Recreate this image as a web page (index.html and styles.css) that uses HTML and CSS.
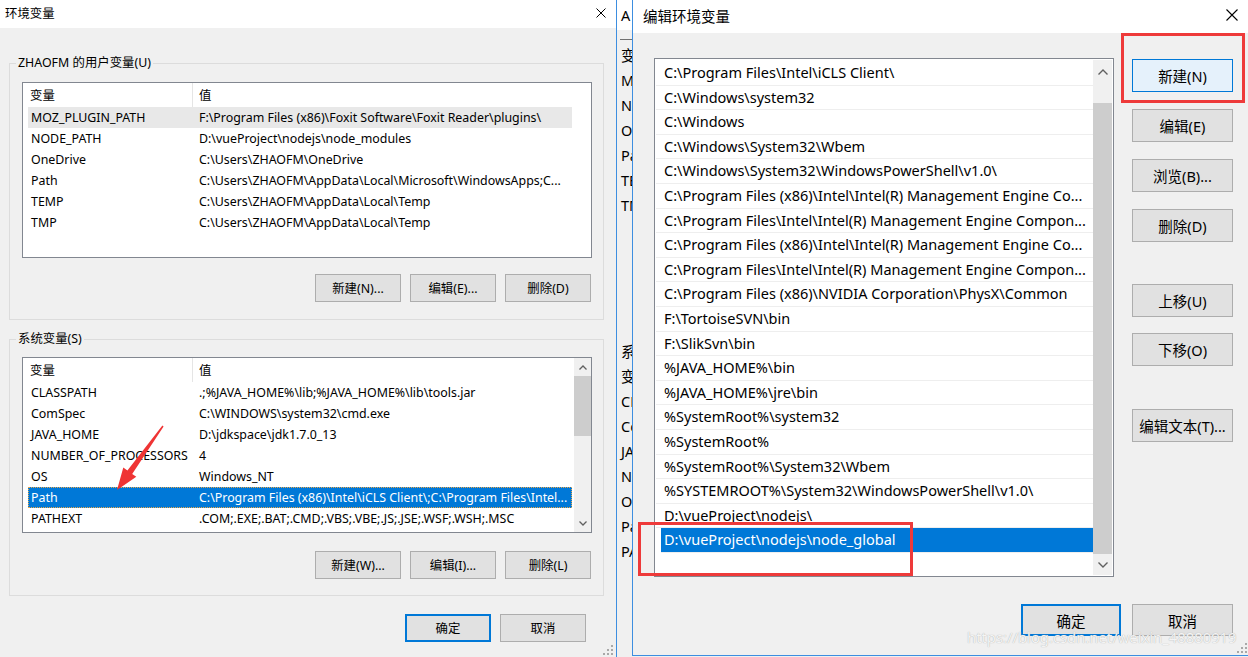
FILE: index.html
```html
<!DOCTYPE html>
<html lang="zh-CN">
<head>
    <meta charset="UTF-8">
    <title>环境变量</title>
    <link rel="stylesheet" href="styles.css">
</head>
<body>
<div class="screen">

    <!-- 环境变量 对话框 -->
    <div class="env-dlg">
        <div class="titlebar">
            <span>环境变量</span>
            <svg class="close" width="10" height="10" viewBox="0 0 10 10"><path d="M0.5 0.5L9.5 9.5M9.5 0.5L0.5 9.5" stroke="#000" stroke-width="1"/></svg>
        </div>
        <div class="env-body">
            <fieldset class="group group-user">
                <legend>ZHAOFM 的用户变量(U)</legend>
                <div class="listview">
                    <div class="lv-main">
                        <div class="lv-head"><div class="c1">变量</div><div class="c2">值</div></div>
                        <div class="lv-row hot"><div class="c1">MOZ_PLUGIN_PATH</div><div class="c2">F:\Program Files (x86)\Foxit Software\Foxit Reader\plugins\</div></div>
                        <div class="lv-row"><div class="c1">NODE_PATH</div><div class="c2">D:\vueProject\nodejs\node_modules</div></div>
                        <div class="lv-row"><div class="c1">OneDrive</div><div class="c2">C:\Users\ZHAOFM\OneDrive</div></div>
                        <div class="lv-row"><div class="c1">Path</div><div class="c2">C:\Users\ZHAOFM\AppData\Local\Microsoft\WindowsApps;C...</div></div>
                        <div class="lv-row"><div class="c1">TEMP</div><div class="c2">C:\Users\ZHAOFM\AppData\Local\Temp</div></div>
                        <div class="lv-row"><div class="c1">TMP</div><div class="c2">C:\Users\ZHAOFM\AppData\Local\Temp</div></div>
                    </div>
                </div>
                <div class="btn-row">
                    <button class="btn">新建(N)...</button>
                    <button class="btn">编辑(E)...</button>
                    <button class="btn">删除(D)</button>
                </div>
            </fieldset>

            <fieldset class="group group-sys">
                <legend>系统变量(S)</legend>
                <div class="listview">
                    <div class="lv-main">
                        <div class="lv-head"><div class="c1">变量</div><div class="c2">值</div></div>
                        <div class="lv-row"><div class="c1">CLASSPATH</div><div class="c2">.;%JAVA_HOME%\lib;%JAVA_HOME%\lib\tools.jar</div></div>
                        <div class="lv-row"><div class="c1">ComSpec</div><div class="c2">C:\WINDOWS\system32\cmd.exe</div></div>
                        <div class="lv-row"><div class="c1">JAVA_HOME</div><div class="c2">D:\jdkspace\jdk1.7.0_13</div></div>
                        <div class="lv-row"><div class="c1">NUMBER_OF_PROCESSORS</div><div class="c2">4</div></div>
                        <div class="lv-row"><div class="c1">OS</div><div class="c2">Windows_NT</div></div>
                        <div class="lv-row sel"><div class="c1">Path</div><div class="c2">C:\Program Files (x86)\Intel\iCLS Client\;C:\Program Files\Intel...</div></div>
                        <div class="lv-row"><div class="c1">PATHEXT</div><div class="c2">.COM;.EXE;.BAT;.CMD;.VBS;.VBE;.JS;.JSE;.WSF;.WSH;.MSC</div></div>
                    </div>
                    <div class="vscroll small">
                        <div class="sb-arrow up"><svg width="8" height="5" viewBox="0 0 8 5"><path d="M0.5 4.5L4 1L7.5 4.5" fill="none" stroke="#606060" stroke-width="1.3"/></svg></div>
                        <div class="sb-thumb"></div>
                        <div class="sb-track"></div>
                        <div class="sb-arrow down"><svg width="8" height="5" viewBox="0 0 8 5"><path d="M0.5 0.5L4 4L7.5 0.5" fill="none" stroke="#606060" stroke-width="1.3"/></svg></div>
                    </div>
                </div>
                <div class="btn-row">
                    <button class="btn">新建(W)...</button>
                    <button class="btn">编辑(I)...</button>
                    <button class="btn">删除(L)</button>
                </div>
            </fieldset>

            <div class="footer">
                <button class="btn default">确定</button>
                <button class="btn">取消</button>
            </div>
        </div>
        <svg class="grip" width="10" height="10" viewBox="0 0 10 10" fill="#a8a8a8">
            <rect x="8" y="0" width="2" height="2"/><rect x="8" y="4" width="2" height="2"/><rect x="4" y="4" width="2" height="2"/>
            <rect x="8" y="8" width="2" height="2"/><rect x="4" y="8" width="2" height="2"/><rect x="0" y="8" width="2" height="2"/>
        </svg>
    </div>

    <!-- 后面露出的窗口边 -->
    <div class="behind">
        <div class="bh-title">A</div>
        <div class="bh-rule"></div>
        <div class="bh-line">变量</div>
        <div class="bh-line">MOZ_PLUGIN_PATH</div>
        <div class="bh-line">NODE_PATH</div>
        <div class="bh-line">OneDrive</div>
        <div class="bh-line">Path</div>
        <div class="bh-line">TEMP</div>
        <div class="bh-line">TMP</div>
        <div class="bh-line bh-gap">系统变量</div>
        <div class="bh-line">变量</div>
        <div class="bh-line">CLASSPATH</div>
        <div class="bh-line">ComSpec</div>
        <div class="bh-line">JAVA_HOME</div>
        <div class="bh-line">NUMBER_OF_PROCESSORS</div>
        <div class="bh-line">OS</div>
        <div class="bh-line">Path</div>
        <div class="bh-line">PATHEXT</div>
    </div>

    <!-- 编辑环境变量 对话框 -->
    <div class="edit-dlg">
        <div class="titlebar">
            <span>编辑环境变量</span>
            <svg class="close" width="12" height="12" viewBox="0 0 12 12"><path d="M0.5 0.5L11.5 11.5M11.5 0.5L0.5 11.5" stroke="#000" stroke-width="1.1"/></svg>
        </div>
        <div class="edit-body">
            <div class="edit-main">
                <div class="path-list">
                    <div class="path-rows">
                        <div class="path-row">C:\Program Files\Intel\iCLS Client\</div>
                        <div class="path-row">C:\Windows\system32</div>
                        <div class="path-row">C:\Windows</div>
                        <div class="path-row">C:\Windows\System32\Wbem</div>
                        <div class="path-row">C:\Windows\System32\WindowsPowerShell\v1.0\</div>
                        <div class="path-row">C:\Program Files (x86)\Intel\Intel(R) Management Engine Co...</div>
                        <div class="path-row">C:\Program Files\Intel\Intel(R) Management Engine Compon...</div>
                        <div class="path-row">C:\Program Files (x86)\Intel\Intel(R) Management Engine Co...</div>
                        <div class="path-row">C:\Program Files\Intel\Intel(R) Management Engine Compon...</div>
                        <div class="path-row">C:\Program Files (x86)\NVIDIA Corporation\PhysX\Common</div>
                        <div class="path-row">F:\TortoiseSVN\bin</div>
                        <div class="path-row">F:\SlikSvn\bin</div>
                        <div class="path-row">%JAVA_HOME%\bin</div>
                        <div class="path-row">%JAVA_HOME%\jre\bin</div>
                        <div class="path-row">%SystemRoot%\system32</div>
                        <div class="path-row">%SystemRoot%</div>
                        <div class="path-row">%SystemRoot%\System32\Wbem</div>
                        <div class="path-row">%SYSTEMROOT%\System32\WindowsPowerShell\v1.0\</div>
                        <div class="path-row">D:\vueProject\nodejs\</div>
                        <div class="path-row editing">D:\vueProject\nodejs\node_global</div>
                    </div>
                    <div class="vscroll big">
                        <div class="sb-arrow up"><svg width="10" height="6" viewBox="0 0 10 6"><path d="M0.5 5.5L5 1L9.5 5.5" fill="none" stroke="#606060" stroke-width="1.4"/></svg></div>
                        <div class="sb-track top"></div>
                        <div class="sb-thumb"></div>
                        <div class="sb-arrow down"><svg width="10" height="6" viewBox="0 0 10 6"><path d="M0.5 0.5L5 5L9.5 0.5" fill="none" stroke="#606060" stroke-width="1.4"/></svg></div>
                    </div>
                </div>
                <div class="edit-btns">
                    <button class="btn focus">新建(N)</button>
                    <button class="btn">编辑(E)</button>
                    <button class="btn">浏览(B)...</button>
                    <button class="btn">删除(D)</button>
                    <button class="btn move-up">上移(U)</button>
                    <button class="btn move-down">下移(O)</button>
                    <button class="btn edit-text">编辑文本(T)...</button>
                </div>
            </div>
            <div class="footer">
                <button class="btn default">确定</button>
                <button class="btn">取消</button>
            </div>
        </div>
        <svg class="grip" width="10" height="10" viewBox="0 0 10 10" fill="#a8a8a8">
            <rect x="8" y="0" width="2" height="2"/><rect x="8" y="4" width="2" height="2"/><rect x="4" y="4" width="2" height="2"/>
            <rect x="8" y="8" width="2" height="2"/><rect x="4" y="8" width="2" height="2"/><rect x="0" y="8" width="2" height="2"/>
        </svg>
    </div>

    <!-- 截图上的标注 -->
    <div class="mark mark-new"></div>
    <div class="mark mark-row"></div>
    <svg class="arrow" width="70" height="76" viewBox="100 420 70 76">
        <polygon points="117,490 136.3,476.8 132.2,473.9 163.6,426.4 162.4,425.6 127.4,470.4 123.3,467.4" fill="#ef3434"/>
    </svg>
    <div class="watermark">https://blog.csdn.net/weixin_48880919</div>
</div>
</body>
</html>
```

FILE: styles.css
```css
* {
    box-sizing: border-box;
}
body {
    margin: 0;
    width: 1248px;
    height: 657px;
    overflow: hidden;
    background: #f0f0f0;
    color: #000;
    font-family: "Noto Sans", "Noto Sans CJK SC", sans-serif;
}
.screen {
    position: relative;
    display: flex;
    height: 657px;
}

/* 通用 */
.titlebar {
    display: flex;
    align-items: center;
    justify-content: space-between;
    background: #fff;
}
.btn {
    margin: 0;
    padding: 0;
    background: #e1e1e1;
    border: 1px solid #adadad;
    color: #000;
    font: inherit;
    white-space: nowrap;
}
.btn.default {
    border: 2px solid #0078d7;
}
.btn.focus {
    background: #e5f1fb;
    border-color: #0078d7;
}
.footer {
    display: flex;
    justify-content: flex-end;
}
.grip {
    position: absolute;
    right: 3px;
    bottom: 2px;
}
.vscroll {
    display: flex;
    flex-direction: column;
    background: #f0f0f0;
}
.sb-arrow {
    display: flex;
    align-items: center;
    justify-content: center;
}
.sb-thumb {
    background: #cdcdcd;
}

/* 环境变量 */
.env-dlg {
    position: relative;
    flex-shrink: 0;
    width: 617px;
    height: 657px;
    border-right: 1px solid #3d8ee0;
    font-size: 12.4px;
}
.env-dlg .titlebar {
    height: 28px;
    padding: 0 10px 2px 5px;
}
.env-body {
    padding: 27px 12px 0 9px;
}
.group {
    margin: 0;
    min-width: 0;
    border: 1px solid #dcdcdc;
    padding: 11px 11px 17px 12px;
}
.group legend {
    margin-left: -6px;
    padding: 0 2px;
    line-height: 16px;
}
.group-sys {
    margin-top: 11px;
    padding-top: 10px;
    padding-bottom: 16px;
}
.listview {
    display: flex;
    height: 176px;
    border: 1px solid #828790;
    background: #fff;
}
.lv-main {
    flex: 1;
    min-width: 0;
}
.lv-head {
    display: flex;
    height: 24px;
}
.lv-head .c1 {
    width: 170px;
    padding-left: 7px;
    border-right: 1px solid #e5e5e5;
    line-height: 25px;
}
.lv-head .c2 {
    padding-left: 6px;
    line-height: 25px;
}
.lv-row {
    display: flex;
    width: 544px;
    height: 21px;
    margin-left: 5px;
    line-height: 22px;
    white-space: nowrap;
}
.lv-row .c1 {
    width: 168px;
    padding-left: 3px;
    overflow: hidden;
}
.lv-row .c2 {
    flex: 1;
    padding-left: 3px;
    overflow: hidden;
}
.lv-row.hot {
    background: #e8e8e8;
}
.lv-row.sel {
    background: #0078d7;
    color: #fff;
    outline: 1px dotted #e9a84c;
    outline-offset: -1px;
}
.vscroll.small {
    width: 17px;
}
.vscroll.small .sb-arrow {
    height: 18px;
}
.vscroll.small .sb-thumb {
    height: 60px;
}
.vscroll.small .sb-track {
    flex: 1;
}
.btn-row {
    display: flex;
    justify-content: flex-end;
    gap: 9px;
    margin: 16px 1px 0 0;
}
.group-sys .btn-row {
    margin-top: 18px;
}
.env-dlg .btn {
    width: 86px;
    height: 28px;
}
.env-dlg .footer {
    gap: 9px;
    margin-top: 18px;
    padding-right: 18px;
}

/* 后面的窗口 */
.behind {
    flex-shrink: 0;
    width: 15px;
    overflow: hidden;
    white-space: nowrap;
    font-size: 14.5px;
    color: #000;
}
.bh-title {
    height: 30px;
    padding-left: 4px;
    line-height: 30px;
    background: #fff;
}
.bh-rule {
    height: 1px;
    margin: 9px 0 0 3px;
    background: #707070;
}
.bh-line {
    height: 25px;
    padding-left: 4px;
    line-height: 25px;
}
.bh-line:nth-child(3) {
    margin-top: 3px;
}
.bh-gap {
    margin-top: 121px;
}

/* 编辑环境变量 */
.edit-dlg {
    position: relative;
    flex: 1;
    height: 656px;
    border-left: 1px solid #3d8ee0;
    border-bottom: 1px solid #3d8ee0;
    font-size: 14.5px;
}
.edit-dlg .titlebar {
    height: 33px;
    padding: 0 10px 3px 10px;
}
.edit-body {
    padding: 25px 15px 0 21px;
}
.edit-main {
    display: flex;
    gap: 18px;
}
.path-list {
    display: flex;
    width: 460px;
    height: 519px;
    padding: 1px;
    border: 1px solid #828790;
    background: #fff;
}
.path-rows {
    flex: 1;
    min-width: 0;
    padding-top: 1px;
}
.path-row {
    height: 24.6px;
    padding-left: 8px;
    border-bottom: 1px solid #eeeeee;
    line-height: 23px;
    white-space: nowrap;
    overflow: hidden;
}
.path-row.editing {
    margin-left: 5px;
    padding-left: 3px;
    background: #0078d7;
    color: #fff;
}
.vscroll.big {
    width: 19px;
}
.vscroll.big .sb-arrow.up {
    height: 24px;
}
.vscroll.big .sb-track.top {
    height: 19px;
}
.vscroll.big .sb-thumb {
    height: 451px;
}
.vscroll.big .sb-arrow.down {
    flex: 1;
}
.edit-btns {
    display: flex;
    flex-direction: column;
    gap: 17px;
    width: 101px;
    padding-top: 1px;
}
.edit-btns .btn {
    height: 33px;
}
.edit-btns .move-up {
    margin-top: 25px;
}
.edit-btns .move-down {
    margin-top: -1px;
}
.edit-btns .edit-text {
    margin-top: 26px;
}
.edit-dlg .footer {
    gap: 11px;
    margin-top: 27px;
}
.edit-dlg .footer .btn {
    width: 101px;
    height: 32px;
}
.edit-dlg .footer .btn.default {
    width: 100px;
}
.edit-dlg .grip {
    right: 1px;
    bottom: 2px;
}

/* 标注 */
.mark {
    position: absolute;
    border: 3px solid #ee3a3a;
}
.mark-new {
    left: 1121px;
    top: 33px;
    width: 124px;
    height: 70px;
}
.mark-row {
    left: 638px;
    top: 522px;
    width: 275px;
    height: 54px;
}
.arrow {
    position: absolute;
    left: 100px;
    top: 420px;
}
.watermark {
    position: absolute;
    left: 967px;
    top: 628px;
    font-size: 14.8px;
    line-height: 18px;
    color: #f4f4f4;
    text-shadow: 0 0 1px #a0a0a0;
    white-space: nowrap;
}
```
